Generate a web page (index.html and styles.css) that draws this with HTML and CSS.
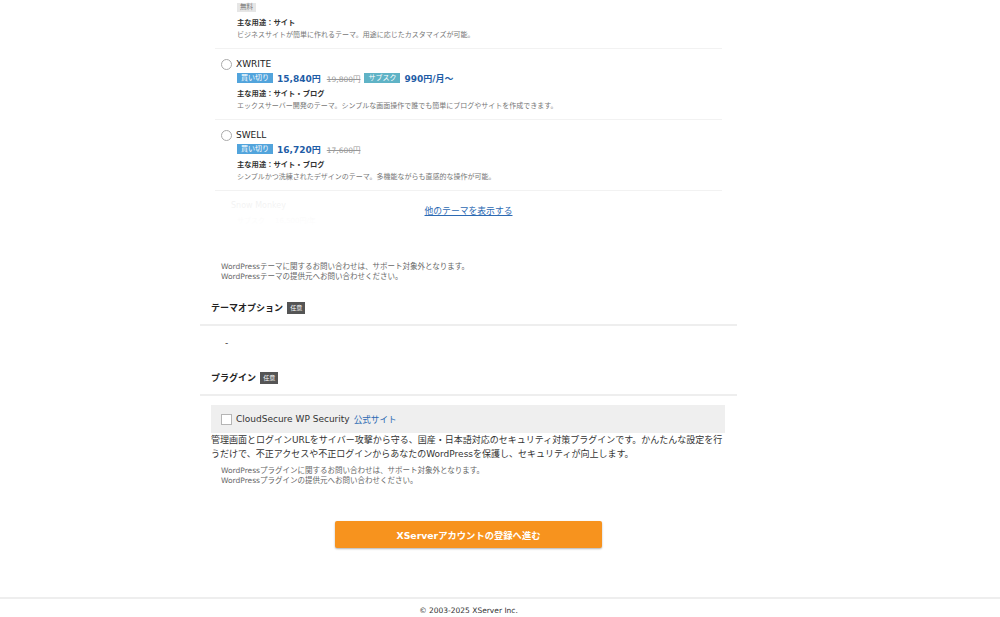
FILE: index.html
```html
<!DOCTYPE html>
<html lang="ja">

<head>
    <meta charset="UTF-8">
    <meta name="viewport" content="width=device-width, initial-scale=1.0">
    <title>WordPressテーマ選択</title>
    <link rel="stylesheet" href="styles.css">
</head>

<body>
    <div class="contenedor">
        <div class="theme-list">
            <div class="item partial">
                <div class="item-body">
                    <div class="price-row">
                        <span class="badge badge-free">無料</span>
                    </div>
                    <p class="usage">主な用途：サイト</p>
                    <p class="desc">ビジネスサイトが簡単に作れるテーマ。用途に応じたカスタマイズが可能。</p>
                </div>
            </div>

            <div class="item">
                <label class="item-head">
                    <span class="radio"></span>
                    <span class="name">XWRITE</span>
                </label>
                <div class="item-body">
                    <div class="price-row">
                        <span class="badge badge-buy">買い切り</span>
                        <span class="price">15,840円</span>
                        <span class="old-price">19,800円</span>
                        <span class="badge badge-sub">サブスク</span>
                        <span class="price">990円/月〜</span>
                    </div>
                    <p class="usage">主な用途：サイト・ブログ</p>
                    <p class="desc">エックスサーバー開発のテーマ。シンプルな画面操作で誰でも簡単にブログやサイトを作成できます。</p>
                </div>
            </div>

            <div class="item">
                <label class="item-head">
                    <span class="radio"></span>
                    <span class="name">SWELL</span>
                </label>
                <div class="item-body">
                    <div class="price-row">
                        <span class="badge badge-buy">買い切り</span>
                        <span class="price">16,720円</span>
                        <span class="old-price">17,600円</span>
                    </div>
                    <p class="usage">主な用途：サイト・ブログ</p>
                    <p class="desc">シンプルかつ洗練されたデザインのテーマ。多機能ながらも直感的な操作が可能。</p>
                </div>
            </div>

            <div class="more">
                <div class="item item-faded">
                    <label class="item-head">
                        <span class="name">Snow Monkey</span>
                    </label>
                    <div class="item-body">
                        <div class="price-row">
                            <span class="faded-text">サブスク</span>
                            <span class="faded-text">16,500円/年</span>
                        </div>
                    </div>
                </div>
                <div class="more-cover">
                    <a href="#" class="more-link">他のテーマを表示する</a>
                </div>
            </div>
        </div>

        <p class="note note-theme">WordPressテーマに関するお問い合わせは、サポート対象外となります。<br>WordPressテーマの提供元へお問い合わせください。</p>

        <h2 class="section-title first">テーマオプション <span class="optional">任意</span></h2>
        <p class="option-value">-</p>

        <h2 class="section-title">プラグイン <span class="optional">任意</span></h2>
        <label class="plugin-box">
            <span class="checkbox"></span>
            <span class="plugin-name">CloudSecure WP Security</span>
            <a href="#" class="plugin-link">公式サイト</a>
        </label>
        <p class="plugin-desc">管理画面とログインURLをサイバー攻撃から守る、国産・日本語対応のセキュリティ対策プラグインです。かんたんな設定を行うだけで、不正アクセスや不正ログインからあなたのWordPressを保護し、セキュリティが向上します。</p>
        <p class="note note-plugin">WordPressプラグインに関するお問い合わせは、サポート対象外となります。<br>WordPressプラグインの提供元へお問い合わせください。</p>

        <button type="button" class="btn-next">XServerアカウントの登録へ進む</button>
    </div>

    <footer class="footer">
        <div class="footer-inner">© 2003-2025 XServer Inc.</div>
    </footer>
</body>

</html>
```

FILE: styles.css
```css
* {
    padding: 0;
    margin: 0;
    box-sizing: border-box;
}

body {
    font-family: "DejaVu Sans", "Noto Sans CJK JP", sans-serif;
    color: #333;
    background: #fff;
}

.contenedor {
    width: 537px;
    margin-left: 200px;
}

.theme-list {
    margin: 0 15px;
}

.item {
    padding: 9px 0 7px 6px;
    border-bottom: 1px solid #f2f2f2;
}

.item.partial {
    padding-top: 0;
}

.item-head {
    display: flex;
    align-items: center;
    height: 12px;
    gap: 4px;
}

.radio {
    width: 11px;
    height: 11px;
    border: 1px solid #aaa;
    border-radius: 50%;
    background: #fff;
}

.name {
    font-size: 9px;
    line-height: 12px;
    color: #222;
}

.item-body {
    padding-left: 16px;
}

.price-row {
    display: flex;
    align-items: center;
    height: 14px;
    margin-top: 1px;
}

.partial .price-row {
    margin-top: 0;
}

.badge {
    display: inline-block;
    font-size: 7px;
    line-height: 10px;
    height: 10px;
    padding: 0 4px;
    color: #fff;
}

.badge-buy {
    background: #52a4dc;
}

.badge-sub {
    background: #5fb3c6;
    margin-left: 4px;
}

.badge-free {
    background: #e6e6e6;
    color: #777;
    font-size: 6.5px;
    height: 9px;
    line-height: 9px;
    padding: 0 3px;
}

.price {
    font-size: 9px;
    font-weight: bold;
    color: #1f5da6;
    margin-left: 4px;
}

.old-price {
    font-size: 7.5px;
    color: #999;
    text-decoration: line-through;
    margin-left: 6px;
}

.usage {
    font-size: 7.3px;
    font-weight: bold;
    line-height: 12px;
    margin-top: 3px;
    color: #333;
}

.desc {
    font-size: 7px;
    line-height: 12px;
    color: #777;
}

.more {
    position: relative;
    height: 56px;
    overflow: hidden;
}

.item-faded {
    border-bottom: none;
}

.item-faded .name {
    color: #ddd;
    font-size: 8px;
    margin-left: 10px;
}

.faded-text {
    font-size: 7px;
    color: #e6e6e6;
    margin-right: 10px;
}

.more-cover {
    position: absolute;
    top: 0;
    left: 0;
    right: 0;
    bottom: 0;
    background: linear-gradient(rgba(255, 255, 255, 0.45), #fff 70%);
    text-align: center;
    padding-top: 14px;
    font-size: 8.8px;
    line-height: 12px;
}

.more-link {
    color: #2d6ab3;
    text-decoration: underline;
}

.note {
    font-size: 7.5px;
    line-height: 10px;
    color: #666;
    margin-left: 21px;
}

.note-theme {
    margin-top: 15px;
}

.section-title {
    font-size: 9px;
    font-weight: bold;
    line-height: 12px;
    padding: 0 0 10px 11px;
    border-bottom: 2px solid #eee;
    margin-top: 23px;
    color: #222;
}

.section-title.first {
    margin-top: 20px;
}

.optional {
    display: inline-block;
    font-size: 6px;
    font-weight: normal;
    line-height: 12px;
    height: 12px;
    padding: 0 3px;
    background: #555;
    color: #fff;
    vertical-align: top;
    margin-left: 1px;
}

.option-value {
    font-size: 9px;
    line-height: 12px;
    margin: 11px 0 0 25px;
}

.plugin-box {
    display: flex;
    align-items: center;
    gap: 4px;
    height: 28px;
    margin: 9px 12px 0 11px;
    padding-left: 10px;
    background: #efefef;
}

.checkbox {
    width: 11px;
    height: 11px;
    border: 1px solid #b5b5b5;
    background: #fff;
}

.plugin-name {
    font-size: 9px;
    color: #333;
}

.plugin-link {
    font-size: 8.6px;
    color: #2d6ab3;
    text-decoration: none;
}

.plugin-desc {
    font-size: 9px;
    line-height: 14px;
    width: 516px;
    margin-left: 11px;
    color: #333;
}

.note-plugin {
    margin-top: 5px;
}

.btn-next {
    display: block;
    width: 267px;
    height: 27px;
    margin: 35px auto 0;
    border: none;
    border-radius: 2px;
    background: #f7931e;
    box-shadow: 0 1px 2px rgba(0, 0, 0, 0.3);
    color: #fff;
    font-family: "DejaVu Sans", "Noto Sans CJK JP", sans-serif;
    font-size: 9.3px;
    font-weight: bold;
}

.footer {
    margin-top: 49px;
    border-top: 2px solid #eee;
    padding-top: 6px;
}

.footer-inner {
    width: 537px;
    margin-left: 200px;
    text-align: center;
    font-size: 7.5px;
    line-height: 12px;
    color: #333;
}
```
